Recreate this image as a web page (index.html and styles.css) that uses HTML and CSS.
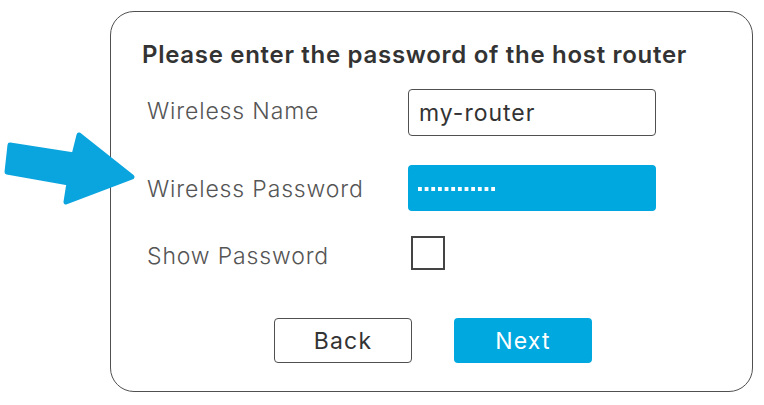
FILE: index.html
```html
<!DOCTYPE html>
<html>
<head>
<meta charset="utf-8">
<link rel="stylesheet" href="styles.css">
</head>
<body>
<div class="stage">
  <svg class="arrow" width="140" height="80" viewBox="0 130 140 80">
    <polygon points="10,145 74,155 79,135 132,177 66,202 69,183 7,172" fill="#0aa5de" stroke="#0aa5de" stroke-width="5" stroke-linejoin="round"/>
  </svg>
  <div class="card">
    <h1 class="title">Please enter the password of the host router</h1>
    <div class="row row-name">
      <span class="label">Wireless Name</span>
      <div class="field field-text">my-router</div>
    </div>
    <div class="row row-pass">
      <span class="label">Wireless Password</span>
      <div class="field field-pass"><span class="dots"></span></div>
    </div>
    <div class="row row-show">
      <span class="label">Show Password</span>
      <div class="checkbox"></div>
    </div>
    <div class="actions">
      <button class="btn btn-back">Back</button>
      <button class="btn btn-next">Next</button>
    </div>
  </div>
</div>
</body>
</html>
```
FILE: styles.css
```css
html, body {
  margin: 0;
  padding: 0;
  background: #ffffff;
}
body {
  width: 764px;
  height: 405px;
  overflow: hidden;
  font-family: "Inter", "Lato", sans-serif;
}
.stage {
  position: relative;
  width: 764px;
  height: 405px;
  padding-top: 11px;
  padding-left: 110px;
  box-sizing: border-box;
}
.arrow {
  position: absolute;
  left: 0;
  top: 130px;
}
.card {
  width: 643px;
  height: 381px;
  box-sizing: border-box;
  border: 1.5px solid #505050;
  border-radius: 24px;
  padding: 27px 0 0 31px;
  display: flex;
  flex-direction: column;
}
.title {
  margin: 0;
  font-size: 24px;
  line-height: 31px;
  font-weight: 600;
  color: #333333;
  letter-spacing: 0.7px;
}
.row {
  display: flex;
  align-items: center;
  padding-left: 5px;
}
.label {
  width: 261px;
  font-size: 23px;
  font-weight: 300;
  color: #555555;
  letter-spacing: 0.85px;
}
.row-name { margin-top: 19px; }
.row-name .label { margin-top: -3px; }
.row-pass { margin-top: 29px; }
.row-pass .label { margin-top: 2px; }
.row-show { margin-top: 25px; }
.row-show .label { margin-top: 5px; }
.field {
  width: 248px;
  height: 47px;
  box-sizing: border-box;
  border-radius: 4px;
  display: flex;
  align-items: center;
  padding-left: 10px;
}
.field-text {
  border: 1.5px solid #505050;
  font-size: 23px;
  color: #333333;
  letter-spacing: 1px;
}
.field-pass {
  background: #00a8e0;
  height: 46px;
}
.dots {
  width: 78px;
  height: 4px;
  background-image: linear-gradient(to right, #ffffff 0 4px, transparent 4px 6.67px);
  background-size: 6.67px 4px;
  margin-top: 1px;
}
.checkbox {
  width: 34px;
  height: 34px;
  box-sizing: border-box;
  border: 2px solid #444444;
  margin-left: 3px;
}
.actions {
  display: flex;
  gap: 42px;
  margin-top: 48px;
  padding-left: 132px;
}
.btn {
  width: 138px;
  height: 45px;
  box-sizing: border-box;
  border-radius: 4px;
  font-family: "Inter", "Lato", sans-serif;
  font-size: 23px;
  font-weight: 400;
  letter-spacing: 1.2px;
  padding: 0;
}
.btn-back {
  background: #ffffff;
  border: 1.5px solid #505050;
  color: #333333;
}
.btn-next {
  background: #00a8e0;
  border: none;
  color: #ffffff;
}
```
